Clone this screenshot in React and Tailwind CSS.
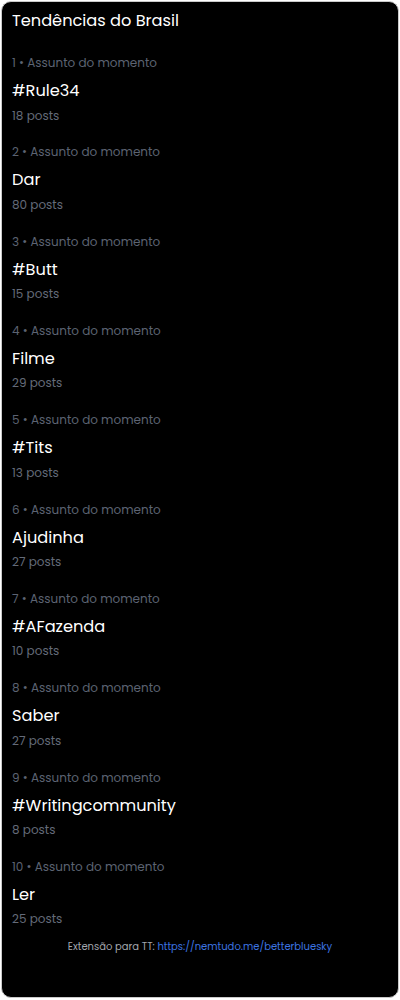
import React from "react";

const trends = [
  { name: "#Rule34", posts: 18 },
  { name: "Dar", posts: 80 },
  { name: "#Butt", posts: 15 },
  { name: "Filme", posts: 29 },
  { name: "#Tits", posts: 13 },
  { name: "Ajudinha", posts: 27 },
  { name: "#AFazenda", posts: 10 },
  { name: "Saber", posts: 27 },
  { name: "#Writingcommunity", posts: 8 },
  { name: "Ler", posts: 25 },
];

export default function App() {
  return (
    <div className="w-[400px] h-[1000px] bg-white p-px font-['Poppins','Inter',sans-serif]">
      <div className="h-[997px] w-[398px] bg-black border border-[#c9c9c9] rounded-[10px] flex flex-col px-[10px] pt-[7px]">
        {/* header */}
        <h2 className="text-white text-[16.2px] leading-6">Tendências do Brasil</h2>

        <div className="flex flex-col gap-[16.83px] mt-5">
          {trends.map((t, i) => (
            <div key={i} className="flex flex-col">
              <p className="text-[#5c6372] text-[12px] leading-5">
                {i + 1} • Assunto do momento
              </p>
              <p className="text-white text-[16.2px] leading-6 mt-[6px]">{t.name}</p>
              <p className="text-[#646b79] text-[12px] leading-5 mt-[2.5px]">{t.posts} posts</p>
            </div>
          ))}
        </div>

        <p className="text-center text-[10px] leading-4 mt-[9.5px] text-[#a3a7ae]">
          Extensão para TT:{" "}
          <a href="#" className="text-[#3c74e0]">https://nemtudo.me/betterbluesky</a>
        </p>
      </div>
    </div>
  );
}
